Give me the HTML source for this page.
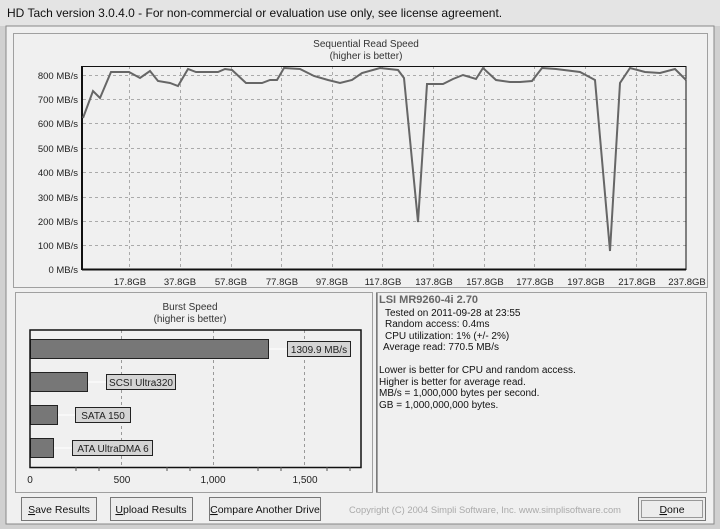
<!DOCTYPE html>
<html><head><style>
body{margin:0;width:720px;height:529px;overflow:hidden;background:#d6d6d6;font-family:"Liberation Sans",sans-serif}
svg{display:block}
</style></head><body>
<svg width="720" height="529" xmlns="http://www.w3.org/2000/svg" font-family="Liberation Sans, sans-serif">
<rect x="0" y="0" width="720" height="529" fill="#d0d0d0"/>
<rect x="0" y="0" width="720" height="26" fill="#e4e4e4"/>
<text x="7" y="17" font-size="12" fill="#111">HD Tach version 3.0.4.0  - For non-commercial or evaluation use only, see license agreement.</text>
<rect x="6" y="26" width="708" height="498" fill="#f0f0f0" stroke="#888"/>
<!-- top panel -->
<rect x="13.5" y="33.5" width="694" height="254" fill="#f0f0f0" stroke="#a0a0a0"/>
<text x="366" y="47" font-size="10" fill="#333" text-anchor="middle">Sequential Read Speed</text>
<text x="366" y="59" font-size="10" fill="#333" text-anchor="middle">(higher is better)</text>
<g stroke="#aaa" stroke-dasharray="3,3" stroke-width="1">
<line x1="83" y1="75.5" x2="686" y2="75.5"/><line x1="83" y1="99.5" x2="686" y2="99.5"/><line x1="83" y1="123.5" x2="686" y2="123.5"/><line x1="83" y1="148.5" x2="686" y2="148.5"/><line x1="83" y1="172.5" x2="686" y2="172.5"/><line x1="83" y1="197.5" x2="686" y2="197.5"/><line x1="83" y1="221.5" x2="686" y2="221.5"/><line x1="83" y1="245.5" x2="686" y2="245.5"/>
<line x1="129.5" y1="66" x2="129.5" y2="270"/><line x1="180.5" y1="66" x2="180.5" y2="270"/><line x1="231.5" y1="66" x2="231.5" y2="270"/><line x1="281.5" y1="66" x2="281.5" y2="270"/><line x1="332.5" y1="66" x2="332.5" y2="270"/><line x1="382.5" y1="66" x2="382.5" y2="270"/><line x1="433.5" y1="66" x2="433.5" y2="270"/><line x1="484.5" y1="66" x2="484.5" y2="270"/><line x1="534.5" y1="66" x2="534.5" y2="270"/><line x1="585.5" y1="66" x2="585.5" y2="270"/><line x1="636.5" y1="66" x2="636.5" y2="270"/>
</g>
<path d="M82.5 270V66.5H686V270" fill="none" stroke="#111" stroke-width="1"/>
<line x1="82" y1="269.5" x2="686" y2="269.5" stroke="#111" stroke-width="2"/>
<line x1="82" y1="66" x2="82" y2="270" stroke="#111" stroke-width="2"/>
<g font-size="9.5" fill="#222" text-anchor="end">
<text x="78" y="79">800 MB/s</text><text x="78" y="103">700 MB/s</text><text x="78" y="127">600 MB/s</text><text x="78" y="152">500 MB/s</text><text x="78" y="176">400 MB/s</text><text x="78" y="201">300 MB/s</text><text x="78" y="225">200 MB/s</text><text x="78" y="249">100 MB/s</text><text x="78" y="273">0 MB/s</text>
</g>
<g font-size="9.5" fill="#222" text-anchor="middle">
<text x="130" y="285">17.8GB</text><text x="180" y="285">37.8GB</text><text x="231" y="285">57.8GB</text><text x="282" y="285">77.8GB</text><text x="332" y="285">97.8GB</text><text x="383" y="285">117.8GB</text><text x="434" y="285">137.8GB</text><text x="485" y="285">157.8GB</text><text x="535" y="285">177.8GB</text><text x="586" y="285">197.8GB</text><text x="637" y="285">217.8GB</text><text x="687" y="285">237.8GB</text>
</g>
<polyline fill="none" stroke="#666" stroke-width="2" points="83,118 93,91 100,98 111,72 129,72 140,78 150,71 158,81 170,83 178,86 188,69 196,72 218,72 225,69 232,70 246,83 262,83 270,80 277,80 284,68 300,69 314,76 328,80 340,83 352,80 362,73 380,68 398,70 404,78 418,222 427,84 443,84 453,79 463,75 476,79 483,68 496,80 510,82 520,82 532,81 542,68 556,69 580,72 595,80 610,251 620,83 630,68 645,72 660,73 675,69 686,80"/>
<!-- burst panel -->
<rect x="15.5" y="292.5" width="357" height="200" fill="#f0f0f0" stroke="#a0a0a0"/>
<text x="190" y="310" font-size="10" fill="#333" text-anchor="middle">Burst Speed</text>
<text x="190" y="322" font-size="10" fill="#333" text-anchor="middle">(higher is better)</text>
<g stroke="#999" stroke-dasharray="3,3"><line x1="121.5" y1="330" x2="121.5" y2="467"/><line x1="213.5" y1="330" x2="213.5" y2="467"/><line x1="304.5" y1="330" x2="304.5" y2="467"/></g>
<g stroke="#fff"><line x1="269" y1="349" x2="287" y2="349"/><line x1="88" y1="382" x2="107" y2="382"/><line x1="57" y1="415" x2="76" y2="415"/><line x1="53" y1="448" x2="72" y2="448"/></g>
<g fill="#777" stroke="#222">
<rect x="30.5" y="339.5" width="238" height="19"/><rect x="30.5" y="372.5" width="57" height="19"/><rect x="30.5" y="405.5" width="27" height="19"/><rect x="30.5" y="438.5" width="23" height="19"/>
</g>
<path d="M30 330V467.5H361V330Z" fill="none" stroke="#111" stroke-width="1.5"/>
<g fill="#d4d4d4" stroke="#222">
<rect x="287.5" y="341.5" width="63" height="15"/><rect x="106.5" y="374.5" width="69" height="15"/><rect x="75.5" y="407.5" width="55" height="15"/><rect x="72.5" y="440.5" width="80" height="15"/>
</g>
<g font-size="10" fill="#222" text-anchor="middle">
<text x="319" y="353">1309.9 MB/s</text><text x="141" y="386">SCSI Ultra320</text><text x="103" y="419">SATA 150</text><text x="113" y="452">ATA UltraDMA 6</text>
<text x="30" y="483">0</text><text x="122" y="483">500</text><text x="213" y="483">1,000</text><text x="305" y="483">1,500</text>
</g>
<g stroke="#555"><line x1="76" y1="467" x2="76" y2="471"/><line x1="99" y1="467" x2="99" y2="471"/><line x1="167" y1="467" x2="167" y2="471"/><line x1="190" y1="467" x2="190" y2="471"/><line x1="258" y1="467" x2="258" y2="471"/><line x1="281" y1="467" x2="281" y2="471"/><line x1="327" y1="467" x2="327" y2="471"/><line x1="350" y1="467" x2="350" y2="471"/></g>
<!-- info panel -->
<rect x="376.5" y="292.5" width="330" height="200" fill="#f0f0f0" stroke="#a0a0a0"/>
<line x1="377" y1="293" x2="377" y2="492" stroke="#555"/>
<g font-size="10" fill="#111">
<text x="379" y="303" font-weight="bold" fill="#666" font-size="11">LSI MR9260-4i 2.70</text>
<text x="385" y="316">Tested on 2011-09-28 at 23:55</text>
<text x="385" y="327">Random access: 0.4ms</text>
<text x="385" y="339">CPU utilization: 1% (+/- 2%)</text>
<text x="383" y="350">Average read: 770.5 MB/s</text>
<text x="379" y="373">Lower is better for CPU and random access.</text>
<text x="379" y="385">Higher is better for average read.</text>
<text x="379" y="396">MB/s = 1,000,000 bytes per second.</text>
<text x="379" y="408">GB = 1,000,000,000 bytes.</text>
</g>
<!-- buttons -->
<g fill="#ececec" stroke="#777">
<rect x="21.5" y="497.5" width="75" height="23"/><rect x="110.5" y="497.5" width="82" height="23"/><rect x="209.5" y="497.5" width="111" height="23"/><rect x="638.5" y="497.5" width="67" height="23"/>
</g>
<rect x="641.5" y="500.5" width="61" height="17" fill="none" stroke="#444" stroke-dasharray="1,1"/>
<g font-size="10.5" fill="#111" text-anchor="middle">
<text x="59" y="513"><tspan text-decoration="underline">S</tspan>ave Results</text>
<text x="151" y="513"><tspan text-decoration="underline">U</tspan>pload Results</text>
<text x="265" y="513"><tspan text-decoration="underline">C</tspan>ompare Another Drive</text>
<text x="672" y="513"><tspan text-decoration="underline">D</tspan>one</text>
</g>
<text x="349" y="513" font-size="9.5" fill="#aaa" textLength="272" lengthAdjust="spacingAndGlyphs">Copyright (C) 2004 Simpli Software, Inc. www.simplisoftware.com</text>
</svg>
</body></html>
